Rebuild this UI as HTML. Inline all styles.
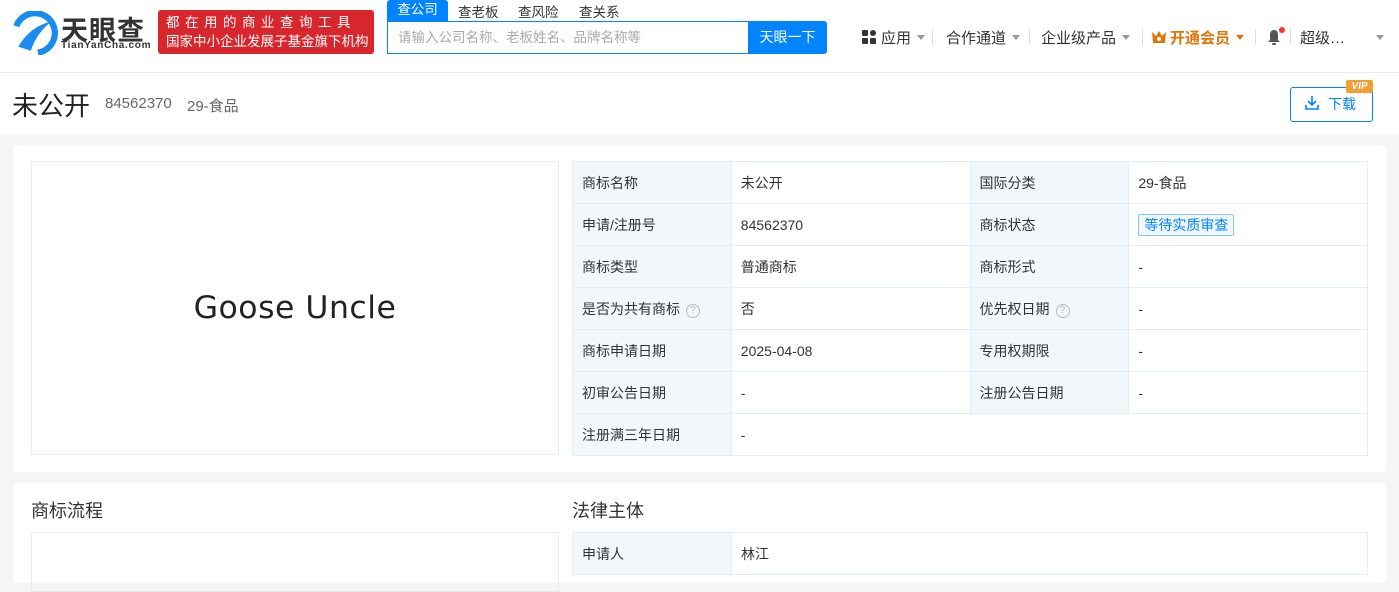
<!DOCTYPE html>
<html><head><meta charset="utf-8">
<style>
*{margin:0;padding:0;box-sizing:border-box}
body{width:1399px;height:574px;overflow:hidden;background:#f5f5f5;font-family:"Liberation Sans","Noto Sans CJK SC",sans-serif;color:#333;font-size:14px;position:relative}
.abs{position:absolute}
.hdr{left:0;top:0;width:1399px;height:72px;background:#fff;box-shadow:0 2px 4px rgba(0,0,0,.06)}
.title{left:0;top:73px;width:1399px;height:62px;background:#fff}
.card{background:#fff;border-radius:4px}
table{border-collapse:collapse;position:absolute;left:572px;top:161px;width:796px}
td{border:1px solid #e4edf6;height:42px;padding:0 9px;font-size:14px;color:#333}
td.l{background:#f2f7fc;width:159px}
td.v{width:239px}
.q{display:inline-block;width:14px;height:14px;border:1px solid #bbb;border-radius:50%;font-size:10px;color:#bbb;text-align:center;line-height:12px;margin-left:6px;vertical-align:1px}
.nav{font-size:15px;color:#333;top:27px}
.tri{display:inline-block;border-left:4px solid transparent;border-right:4px solid transparent;border-top:5px solid #999;margin-left:6px;vertical-align:3px}
.sep{top:29px;width:1px;height:16px;background:#ddd}
</style></head><body>
<div class="abs hdr"></div>
<svg class="abs" style="left:12px;top:11px" width="46" height="44" viewBox="0 0 44 42">
<circle cx="22" cy="21" r="19" fill="none" stroke="#1a8cf0" stroke-width="6" stroke-dasharray="80 40" transform="rotate(200 22 21)"/>
<path d="M6 34 Q18 14 38 10 Q24 20 18 38 Z" fill="#1a8cf0"/>
</svg>
<div class="abs" style="left:61px;top:9px;font-size:27px;font-weight:bold;color:#333;letter-spacing:1px">天眼查</div>
<div class="abs" style="left:61px;top:40px;font-size:10px;color:#333;font-weight:bold;letter-spacing:.7px">TianYanCha.com</div>
<div class="abs" style="left:158px;top:10px;width:216px;height:44px;background:#d8262d;border-radius:3px;color:#fff;font-size:13.5px;line-height:19px;padding:3px 0 0 8px">
<div style="letter-spacing:5.5px">都在用的商业查询工具</div><div>国家中小企业发展子基金旗下机构</div></div>
<div class="abs" style="left:387px;top:0;width:61px;height:21px;background:#0084ff;color:#fff;font-size:13.5px;text-align:center;line-height:20px;border-radius:3px 3px 0 0">查公司</div>
<div class="abs" style="left:458px;top:1px;font-size:13.5px;color:#333">查老板</div>
<div class="abs" style="left:518px;top:1px;font-size:13.5px;color:#333">查风险</div>
<div class="abs" style="left:579px;top:1px;font-size:13.5px;color:#333">查关系</div>
<div class="abs" style="left:387px;top:21px;width:362px;height:33px;border:1px solid #0084ff;border-right:none;background:#fff;color:#aaa;font-size:13.5px;line-height:31px;padding-left:10px">请输入公司名称、老板姓名、品牌名称等</div>
<div class="abs" style="left:748px;top:21px;width:79px;height:33px;background:#0084ff;color:#fff;font-size:14px;text-align:center;line-height:33px;border-radius:0 3px 3px 0">天眼一下</div>
<svg class="abs" style="left:862px;top:30px" width="14" height="14"><rect x="0" y="0" width="6" height="6" rx="1" fill="#333"/><rect x="8" y="0" width="6" height="6" rx="3" fill="#333"/><rect x="0" y="8" width="6" height="6" rx="1" fill="#333"/><rect x="8" y="8" width="6" height="6" rx="1" fill="#333"/></svg>
<div class="abs nav" style="left:881px">应用<span class="tri"></span></div>
<div class="abs sep" style="left:932px"></div>
<div class="abs nav" style="left:946px">合作通道<span class="tri"></span></div>
<div class="abs sep" style="left:1029px"></div>
<div class="abs nav" style="left:1041px">企业级产品<span class="tri"></span></div>
<div class="abs sep" style="left:1142px"></div>
<svg class="abs" style="left:1151px;top:30px" width="16" height="14"><path d="M1 2 L5 6 L8 1 L11 6 L15 2 L14 13 L2 13 Z" fill="#e07408"/><circle cx="8" cy="9" r="2" fill="#fff"/></svg>
<div class="abs nav" style="left:1170px;color:#e07408;font-weight:bold">开通会员<span class="tri" style="border-top-color:#e07408"></span></div>
<div class="abs sep" style="left:1255px"></div>
<svg class="abs" style="left:1265px;top:27px" width="20" height="20"><path d="M3 15 L5 13 L5 8 Q5 3 9 3 Q13 3 13 8 L13 13 L15 15 Z" fill="#555"/><rect x="7" y="16" width="4" height="2" rx="1" fill="#555"/><circle cx="17" cy="3" r="3" fill="#f33"/></svg>
<div class="abs sep" style="left:1290px"></div>
<div class="abs nav" style="left:1300px">超级…</div>
<span class="abs tri" style="left:1370px;top:35px"></span>
<div class="abs title"></div>
<div class="abs" style="left:12px;top:86px;font-size:26px;color:#222">未公开</div>
<div class="abs" style="left:105px;top:95px;font-size:15px;color:#666">84562370</div>
<div class="abs" style="left:187px;top:95px;font-size:15px;color:#666">29-食品</div>
<div class="abs" style="left:1290px;top:87px;width:83px;height:35px;border:1px solid #0084ff;border-radius:3px;color:#0084ff;font-size:14px;line-height:33px;padding-left:37px">下载</div>
<svg class="abs" style="left:1304px;top:95px" width="16" height="16"><path d="M8 1 V10 M4 6 L8 10 L12 6 M2 10 V14 H14 V10" fill="none" stroke="#0084ff" stroke-width="1.6"/></svg>
<div class="abs" style="left:1346px;top:80px;width:27px;height:13px;background:#f0a030;color:#fff;font-size:10px;font-weight:bold;font-style:italic;text-align:center;line-height:13px;border-radius:2px">VIP</div>
<div class="abs card" style="left:13px;top:145px;width:1373px;height:327px"></div>
<div class="abs" style="left:31px;top:161px;width:528px;height:294px;border:1px solid #e8edf3;text-align:center;line-height:292px;font-family:'DejaVu Sans',sans-serif;font-size:31.5px;color:#222;letter-spacing:.5px">Goose Uncle</div>
<table>
<tr><td class="l">商标名称</td><td class="v">未公开</td><td class="l">国际分类</td><td class="v">29-食品</td></tr>
<tr><td class="l">申请/注册号</td><td class="v">84562370</td><td class="l">商标状态</td><td class="v"><span style="border:1px solid #8cc4f7;background:#f0f7ff;color:#0084ff;padding:2px 5px;border-radius:2px">等待实质审查</span></td></tr>
<tr><td class="l">商标类型</td><td class="v">普通商标</td><td class="l">商标形式</td><td class="v">-</td></tr>
<tr><td class="l">是否为共有商标<span class="q">?</span></td><td class="v">否</td><td class="l">优先权日期<span class="q">?</span></td><td class="v">-</td></tr>
<tr><td class="l">商标申请日期</td><td class="v">2025-04-08</td><td class="l">专用权期限</td><td class="v">-</td></tr>
<tr><td class="l">初审公告日期</td><td class="v">-</td><td class="l">注册公告日期</td><td class="v">-</td></tr>
<tr><td class="l">注册满三年日期</td><td colspan="3">-</td></tr>
</table>
<div class="abs card" style="left:13px;top:483px;width:1373px;height:100px"></div>
<div class="abs" style="left:31px;top:497px;font-size:18px;color:#333">商标流程</div>
<div class="abs" style="left:572px;top:497px;font-size:18px;color:#333">法律主体</div>
<div class="abs" style="left:31px;top:532px;width:528px;height:60px;border:1px solid #e8edf3"></div>
<table style="top:532px"><tr><td class="l">申请人</td><td colspan="3">林江</td></tr></table>
</body></html>
